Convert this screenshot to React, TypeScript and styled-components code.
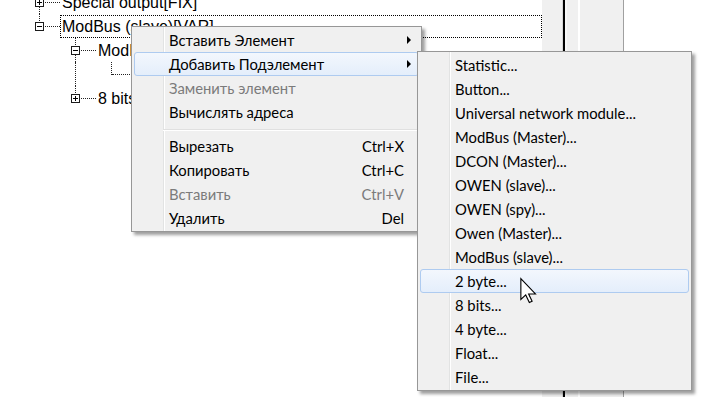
import React from "react";
import styled, { createGlobalStyle } from "styled-components";

const GlobalStyle = createGlobalStyle`
  html, body { margin: 0; padding: 0; background: #fff; overflow: hidden; }
  #root { width: 702px; height: 397px; }
`;

const Screen = styled.div`
  position: relative;
  width: 702px;
  height: 397px;
  overflow: hidden;
  display: flex;
  background: #fff;
`;

/* ---------- tree ---------- */

const TreePane = styled.div`
  width: 542px;
  flex: none;
  box-sizing: border-box;
  margin-top: -10px;
  padding-left: 22px;
  display: flex;
  flex-direction: column;
  font-family: "Liberation Sans", Arial, sans-serif;
  font-size: 16px;
  color: #000;
`;

const TreeRow = styled.div`
  display: flex;
  height: 24px;
  flex: none;
`;

const IndentCell = styled.div<{ $line?: boolean }>`
  width: 18px;
  margin-right: 18px;
  flex: none;
  box-sizing: border-box;
  border-right: 1px dotted ${(p) => (p.$line ? "#222" : "transparent")};
`;

const Connector = styled.div`
  position: relative;
  width: 38px;
  flex: none;
  display: grid;
  grid-template-columns: 18px 20px;
  grid-template-rows: 13px 11px;
`;

const LineUp = styled.div`
  box-sizing: border-box;
  border-right: 1px dotted #222;
`;

const LineRight = styled.div`
  box-sizing: border-box;
  border-bottom: 1px dotted #222;
`;

const LineDown = styled.div<{ $show?: boolean }>`
  box-sizing: border-box;
  border-right: 1px dotted ${(p) => (p.$show ? "#222" : "transparent")};
`;

const ExpandBox = styled.div<{ $open?: boolean }>`
  position: absolute;
  left: 13px;
  top: 8px;
  width: 9px;
  height: 9px;
  box-sizing: border-box;
  border: 1px solid #1b1b1b;
  background: #fff;
  &::before {
    content: "";
    position: absolute;
    left: 1px;
    top: 3px;
    width: 5px;
    height: 1px;
    background: #000;
  }
  &::after {
    content: "";
    position: absolute;
    left: 3px;
    top: 1px;
    width: 1px;
    height: 5px;
    background: #000;
    display: ${(p) => (p.$open ? "none" : "block")};
  }
`;

const NodeLabel = styled.div<{ $selected?: boolean }>`
  box-sizing: border-box;
  height: 23px;
  margin-top: 1px;
  padding: 0 1px;
  line-height: 21px;
  white-space: nowrap;
  border: 1px dotted ${(p) => (p.$selected ? "#000" : "transparent")};
  flex: ${(p) => (p.$selected ? "1" : "none")};
`;

type Node = {
  label: string;
  level: number;
  guides: boolean[];
  next: boolean;
  box?: "open" | "closed";
  selected?: boolean;
};

const nodes: Node[] = [
  { label: "Special output[FIX]", level: 0, guides: [], next: true, box: "closed" },
  { label: "ModBus (slave)[VAR]", level: 0, guides: [], next: false, box: "open", selected: true },
  { label: "ModBus (slave)[0]", level: 1, guides: [false], next: true, box: "open" },
  { label: "2 byte[0]", level: 2, guides: [false, true], next: false },
  { label: "8 bits[1]", level: 1, guides: [false], next: false, box: "closed" },
];

function Tree() {
  return (
    <TreePane>
      {nodes.map((n) => (
        <TreeRow key={n.label}>
          {n.guides.map((g, i) => (
            <IndentCell key={i} $line={g} />
          ))}
          <Connector>
            <LineUp />
            <LineRight />
            <LineDown $show={n.next} />
            {n.box && <ExpandBox $open={n.box === "open"} />}
          </Connector>
          <NodeLabel $selected={n.selected}>{n.label}</NodeLabel>
        </TreeRow>
      ))}
    </TreePane>
  );
}

/* ---------- side panel ---------- */

const SidePanel = styled.div`
  width: 82px;
  flex: none;
  box-sizing: border-box;
  border-right: 1px solid #a0a0a0;
  background: linear-gradient(
    to right,
    #f0f0f0 0 20px,
    #d6d6d6 20px 21px,
    #000 21px 23px,
    #f8f8f8 23px 25px,
    #f0f0f0 25px 36px,
    #ffffff 36px 38px,
    #f0f0f0 38px 100%
  );
`;

/* ---------- menus ---------- */

const MenuBox = styled.div`
  position: absolute;
  box-sizing: border-box;
  border: 1px solid #979797;
  padding: 1px 2px;
  display: flex;
  flex-direction: column;
  background: linear-gradient(
    to right,
    #f0f0f0 0 31px,
    #e2e3e3 31px 32px,
    #ffffff 32px 33px,
    #f0f0f0 33px 100%
  );
  box-shadow: 3px 3px 3px rgba(0, 0, 0, 0.38);
  font-family: Lato, "Noto Sans", sans-serif;
  font-size: 14.8px;
  color: #000;
`;

const ContextMenu = styled(MenuBox)`
  left: 131px;
  top: 26px;
  width: 291px;
`;

const SubMenu = styled(MenuBox)`
  left: 417px;
  top: 51px;
  width: 275px;
`;

const MenuItem = styled.div<{ $hot?: boolean; $disabled?: boolean }>`
  height: 24px;
  flex: none;
  box-sizing: border-box;
  display: flex;
  align-items: center;
  padding: 0 7px 1px 34px;
  border: 1px solid ${(p) => (p.$hot ? "#aecbf0" : "transparent")};
  border-radius: 3px;
  background: ${(p) =>
    p.$hot ? "linear-gradient(to bottom, #f3f7fd, #e4eefb)" : "transparent"};
  color: ${(p) => (p.$disabled ? "#7b7b7b" : "#000")};
  white-space: nowrap;
`;

const ItemLabel = styled.span`
  flex: 1;
`;

const Shortcut = styled.span`
  padding-right: 7px;
`;

const SubArrow = styled.span`
  width: 0;
  height: 0;
  border-left: 4px solid #000;
  border-top: 4px solid transparent;
  border-bottom: 4px solid transparent;
`;

const Separator = styled.div`
  height: 10px;
  flex: none;
  margin-left: 29px;
  background: linear-gradient(
    to bottom,
    transparent 0 5px,
    #e0e0e0 5px 6px,
    #ffffff 6px 7px,
    transparent 7px
  );
`;

const Cursor = styled.svg`
  position: absolute;
  left: 520px;
  top: 278px;
  width: 17px;
  height: 25px;
  overflow: visible;
`;

type MItem = { label: string; shortcut?: string; sub?: boolean; hot?: boolean; disabled?: boolean } | "sep";

const mainItems: MItem[] = [
  { label: "Вставить Элемент", sub: true },
  { label: "Добавить Подэлемент", sub: true, hot: true },
  { label: "Заменить элемент", disabled: true },
  { label: "Вычислять адреса" },
  "sep",
  { label: "Вырезать", shortcut: "Ctrl+X" },
  { label: "Копировать", shortcut: "Ctrl+C" },
  { label: "Вставить", shortcut: "Ctrl+V", disabled: true },
  { label: "Удалить", shortcut: "Del" },
];

const subItems: MItem[] = [
  { label: "Statistic..." },
  { label: "Button..." },
  { label: "Universal network module..." },
  { label: "ModBus (Master)..." },
  { label: "DCON (Master)..." },
  { label: "OWEN (slave)..." },
  { label: "OWEN (spy)..." },
  { label: "Owen (Master)..." },
  { label: "ModBus (slave)..." },
  { label: "2 byte...", hot: true },
  { label: "8 bits..." },
  { label: "4 byte..." },
  { label: "Float..." },
  { label: "File..." },
];

function MenuItems({ items }: { items: MItem[] }) {
  return (
    <>
      {items.map((it, i) =>
        it === "sep" ? (
          <Separator key={i} />
        ) : (
          <MenuItem key={i} $hot={it.hot} $disabled={it.disabled}>
            <ItemLabel>{it.label}</ItemLabel>
            {it.shortcut && <Shortcut>{it.shortcut}</Shortcut>}
            {it.sub && <SubArrow />}
          </MenuItem>
        )
      )}
    </>
  );
}

export default function App() {
  return (
    <>
      <GlobalStyle />
      <Screen>
        <Tree />
        <SidePanel />
        <ContextMenu>
          <MenuItems items={mainItems} />
        </ContextMenu>
        <SubMenu>
          <MenuItems items={subItems} />
        </SubMenu>
        <Cursor viewBox="0 0 12 18">
          <path
            d="M0.5 0.5 L0.5 15.5 L4 12.2 L6.6 17.6 L8.6 16.7 L6.1 11.5 L11 11.5 Z"
            fill="#fff"
            stroke="#000"
            strokeWidth="0.8"
            strokeLinejoin="miter"
          />
        </Cursor>
      </Screen>
    </>
  );
}
